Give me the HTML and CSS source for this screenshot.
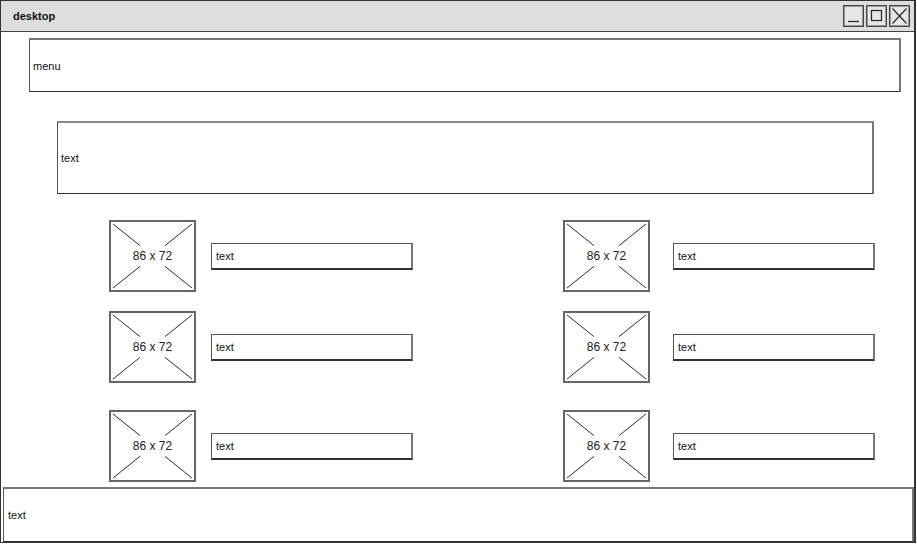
FILE: index.html
```html
<!DOCTYPE html>
<html>
<head>
<meta charset="utf-8">
<link rel="stylesheet" href="styles.css">
</head>
<body>
<div class="window">
  <div class="titlebar">
    <span class="title">desktop</span>
    <div class="controls">
      <div class="ctl"><svg width="19" height="20" viewBox="0 0 19 20"><path d="M4 15.5 H15" stroke="#222" stroke-width="1.2" fill="none"/></svg></div>
      <div class="ctl"><svg width="19" height="20" viewBox="0 0 19 20"><rect x="4.5" y="4.5" width="10" height="10" stroke="#222" stroke-width="1.2" fill="none"/></svg></div>
      <div class="ctl"><svg width="19" height="20" viewBox="0 0 19 20"><path d="M2.5 2.5 L16.5 17.5 M16.5 2.5 L2.5 17.5" stroke="#222" stroke-width="1.1" fill="none"/></svg></div>
    </div>
  </div>
  <div class="content">
    <div class="box menu">menu</div>
    <div class="box banner">text</div>
    <div class="grid">
      <div class="col col-left">
        <div class="item r1"><div class="ph"><svg class="x" viewBox="0 0 86 72" preserveAspectRatio="none"><path d="M2 2 L30 25 M84 2 L56 25 M2 70 L30 47 M84 70 L56 47" stroke="#222" stroke-width="1" fill="none"/></svg><span>86 x 72</span></div><div class="box field">text</div></div>
        <div class="item r2"><div class="ph"><svg class="x" viewBox="0 0 86 72" preserveAspectRatio="none"><path d="M2 2 L30 25 M84 2 L56 25 M2 70 L30 47 M84 70 L56 47" stroke="#222" stroke-width="1" fill="none"/></svg><span>86 x 72</span></div><div class="box field">text</div></div>
        <div class="item r3"><div class="ph"><svg class="x" viewBox="0 0 86 72" preserveAspectRatio="none"><path d="M2 2 L30 25 M84 2 L56 25 M2 70 L30 47 M84 70 L56 47" stroke="#222" stroke-width="1" fill="none"/></svg><span>86 x 72</span></div><div class="box field">text</div></div>
      </div>
      <div class="col col-right">
        <div class="item r1"><div class="ph"><svg class="x" viewBox="0 0 86 72" preserveAspectRatio="none"><path d="M2 2 L30 25 M84 2 L56 25 M2 70 L30 47 M84 70 L56 47" stroke="#222" stroke-width="1" fill="none"/></svg><span>86 x 72</span></div><div class="box field">text</div></div>
        <div class="item r2"><div class="ph"><svg class="x" viewBox="0 0 86 72" preserveAspectRatio="none"><path d="M2 2 L30 25 M84 2 L56 25 M2 70 L30 47 M84 70 L56 47" stroke="#222" stroke-width="1" fill="none"/></svg><span>86 x 72</span></div><div class="box field">text</div></div>
        <div class="item r3"><div class="ph"><svg class="x" viewBox="0 0 86 72" preserveAspectRatio="none"><path d="M2 2 L30 25 M84 2 L56 25 M2 70 L30 47 M84 70 L56 47" stroke="#222" stroke-width="1" fill="none"/></svg><span>86 x 72</span></div><div class="box field">text</div></div>
      </div>
    </div>
    <div class="box footer">text</div>
  </div>
</div>
</body>
</html>
```

FILE: styles.css
```css
* { box-sizing: border-box; }
html, body { margin: 0; padding: 0; background: #fff; }
body {
  font-family: "Liberation Sans", Arial, sans-serif;
  font-size: 11px;
  color: #111;
}
.window {
  width: 916px;
  height: 543px;
  border: 1px solid #333;
  border-right-width: 2px;
  display: flex;
  flex-direction: column;
  overflow: hidden;
}
.titlebar {
  height: 31px;
  background: #dddddd;
  border-bottom: 1px solid #444;
  display: flex;
  align-items: center;
  justify-content: space-between;
  padding: 0 4px 0 12px;
  flex: none;
}
.title { font-weight: bold; font-size: 11px; }
.controls { display: flex; gap: 2px; }
.ctl {
  width: 21px;
  height: 22px;
  border: 1px solid #444;
  box-shadow: inset 0 0 0 1px #999;
  background: #e6e6e6;
  display: flex;
  align-items: center;
  justify-content: center;
}
.ctl svg { display: block; }
.content {
  flex: 1;
  display: flex;
  flex-direction: column;
}
.box {
  border: 1px solid #333;
  border-left-color: #555;
  border-right: 2px solid #777;
  background: #fff;
  display: flex;
  align-items: center;
  padding-left: 3px;
}
.menu {
  margin: 6px 0 0 28px;
  width: 872px;
  height: 54px;
  border-top: 2px solid #777;
}
.banner {
  margin: 29px 0 0 56px;
  width: 817px;
  height: 73px;
  border-top: 2px solid #888;
}
.grid {
  margin: 26px 0 0 108px;
  display: flex;
}
.col { display: flex; flex-direction: column; }
.col-left { width: 454px; }
.col-left .item { gap: 15px; }
.col-right .item { gap: 23px; }
.item { display: flex; align-items: center; }
.item.r2 { margin-top: 19px; }
.item.r3 { margin-top: 27px; }
.ph {
  position: relative;
  width: 87px;
  height: 72px;
  border: 2px solid #666;
  display: flex;
  align-items: center;
  justify-content: center;
  flex: none;
}
.ph .x {
  position: absolute;
  left: 0; top: 0;
  width: 100%;
  height: 100%;
}
.ph span {
  position: relative;
  font-size: 12px;
  color: #222;
}
.field {
  width: 202px;
  height: 27px;
  border-top: 1px solid #555;
  border-bottom: 2px solid #333;
  padding-left: 4px;
}
.footer {
  margin: 5px 0 0 2px;
  width: 911px;
  height: 55px;
  border-top: 2px solid #777;
  padding-left: 4px;
}
```
